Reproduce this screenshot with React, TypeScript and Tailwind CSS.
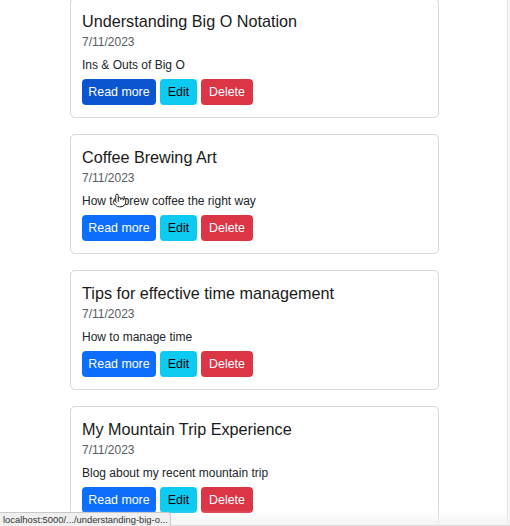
import { Pointer } from "lucide-react";

const posts = [
  { title: "Understanding Big O Notation", date: "7/11/2023", summary: "Ins & Outs of Big O", active: true },
  { title: "Coffee Brewing Art", date: "7/11/2023", summary: "How to brew coffee the right way" },
  { title: "Tips for effective time management", date: "7/11/2023", summary: "How to manage time" },
  { title: "My Mountain Trip Experience", date: "7/11/2023", summary: "Blog about my recent mountain trip" },
];

export default function App() {
  return (
    <div
      className="relative h-[526px] w-[510px] overflow-hidden bg-white text-[#212529]"
      style={{ fontFamily: '"Liberation Sans", Arial, sans-serif' }}
    >
      {/* scrollbar track edge */}
      <div className="absolute right-0 top-0 h-full w-[3px] border-l border-[#e4e4e4] bg-[#f7f7f7]" />

      <div className="mt-[-2px] ml-[70px] w-[369px]">
        {posts.map((post) => (
          <div
            key={post.title}
            className="mb-[16px] rounded-[5px] border border-[#d9d9d9] px-[11px] pt-[12px] pb-[12px]"
          >
            <h5 className="mb-[3px] text-[16.2px] leading-[20px] font-normal text-[#1a1a1a]">
              {post.title}
            </h5>
            <p className="mb-[6px] text-[12px] leading-[17px] text-[#555b61]">{post.date}</p>
            <p className="mb-[4px] text-[12px] leading-[17px] text-[#212529]">{post.summary}</p>
            <div className="flex gap-[4px] pt-px">
              <button
                className={`h-[26px] w-[74px] rounded-[4px] text-[12.4px] text-white ${
                  post.active ? "bg-[#0b55d0]" : "bg-[#0d6efd]"
                }`}
              >
                Read more
              </button>
              <button className="h-[26px] w-[37px] rounded-[4px] bg-[#0dcaf0] text-[12.4px] text-black">
                Edit
              </button>
              <button className="h-[26px] w-[52px] rounded-[4px] bg-[#dc3545] text-[12.4px] text-white">
                Delete
              </button>
            </div>
          </div>
        ))}
      </div>

      {/* mouse cursor */}
      <Pointer
        className="absolute left-[112px] top-[193px] h-[15px] w-[15px] fill-white text-[#222]"
        strokeWidth={1.6}
      />

      {/* bottom fade */}
      <div className="pointer-events-none absolute bottom-0 left-0 h-[16px] w-full border-b border-[#dadada] bg-gradient-to-b from-white/0 to-[#f2f2f2]/80" />

      {/* link status bar */}
      <div className="absolute bottom-0 left-0 h-[14px] w-[171px] overflow-hidden whitespace-nowrap rounded-tr-[3px] border-t border-r border-[#c8c8c8] bg-[#efefef] pl-[3px] text-[9.4px] leading-[13px] text-[#333]">
        localhost:5000/.../understanding-big-o...
      </div>
    </div>
  );
}
